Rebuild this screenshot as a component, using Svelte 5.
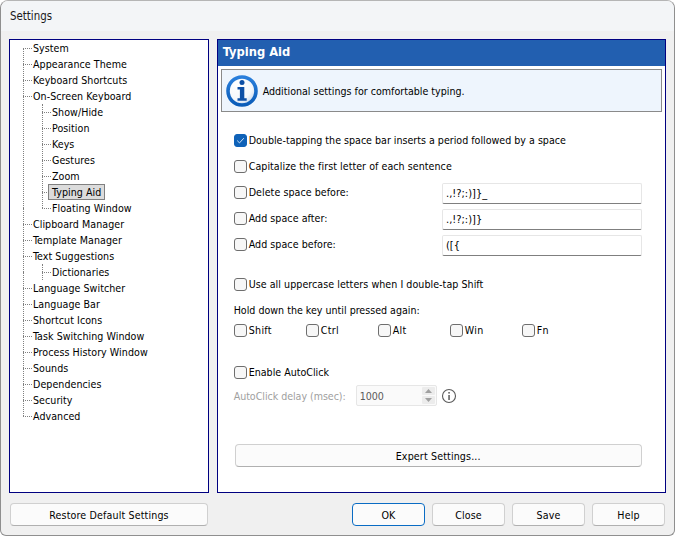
<script>
  const tree = [
    { t: 'System' },
    { t: 'Appearance Theme' },
    { t: 'Keyboard Shortcuts' },
    { t: 'On-Screen Keyboard', kids: ['Show/Hide', 'Position', 'Keys', 'Gestures', 'Zoom', 'Typing Aid', 'Floating Window'] },
    { t: 'Clipboard Manager' },
    { t: 'Template Manager' },
    { t: 'Text Suggestions', kids: ['Dictionaries'] },
    { t: 'Language Switcher' },
    { t: 'Language Bar' },
    { t: 'Shortcut Icons' },
    { t: 'Task Switching Window' },
    { t: 'Process History Window' },
    { t: 'Sounds' },
    { t: 'Dependencies' },
    { t: 'Security' },
    { t: 'Advanced' }
  ];
  const fields = [
    { label: 'Delete space before:', value: '.,!?;:)]}_' },
    { label: 'Add space after:', value: '.,!?;:)]}' },
    { label: 'Add space before:', value: '([{' }
  ];
  const keys = ['Shift', 'Ctrl', 'Alt', 'Win', 'Fn'];
</script>

<div class="window">
  <div class="titlebar">Settings</div>
  <div class="body">
    <div class="panes">
      <div class="tree">
        <ul class="level top">
          {#each tree as item}
            <li class="node">
              <span class="label">{item.t}</span>
              {#if item.kids}
                <ul class="level sub">
                  {#each item.kids as kid}
                    <li class="node"><span class="label" class:selected={kid === 'Typing Aid'}>{kid}</span></li>
                  {/each}
                </ul>
              {/if}
            </li>
          {/each}
        </ul>
      </div>
      <div class="page">
        <div class="header">Typing Aid</div>
        <div class="info">
          <svg class="info-icon" viewBox="0 0 32 32" width="32" height="32" aria-hidden="true">
            <defs>
              <radialGradient id="face" cx="0.35" cy="0.3" r="0.85">
                <stop offset="0" stop-color="#ffffff" />
                <stop offset="0.6" stop-color="#f4f7fb" />
                <stop offset="1" stop-color="#b4cbe6" />
              </radialGradient>
              <linearGradient id="ring" x1="0" y1="0" x2="0" y2="1">
                <stop offset="0" stop-color="#2a7fdc" />
                <stop offset="1" stop-color="#0b5cb8" />
              </linearGradient>
            </defs>
            <circle cx="16" cy="16" r="14" fill="url(#face)" stroke="url(#ring)" stroke-width="3.6" />
            <circle cx="16" cy="7.6" r="2.5" fill="#0c4fa6" />
            <path d="M11.5 12h6.8v11.2h2.4v2.6h-9.2v-2.6h2.4v-8.6h-2.4z" fill="#0c4fa6" />
          </svg>
          <span>Additional settings for comfortable typing.</span>
        </div>
        <div class="form">
          <label class="check first"><span class="box on"><svg viewBox="0 0 13 13" width="13" height="13"><path d="M3.2 6.6 5.5 8.9 9.8 4.2" fill="none" stroke="#cfe3f7" stroke-width="1" /></svg></span>Double-tapping the space bar inserts a period followed by a space</label>
          <label class="check r-next"><span class="box"></span>Capitalize the first letter of each sentence</label>
          <div class="fields">
            {#each fields as f}
              <div class="field">
                <label class="check"><span class="box"></span>{f.label}</label>
                <div class="text-input">{f.value}</div>
              </div>
            {/each}
          </div>
          <label class="check r-upper"><span class="box"></span>Use all uppercase letters when I double-tap Shift</label>
          <div class="hold">Hold down the key until pressed again:</div>
          <div class="keys">
            {#each keys as k}
              <label class="check key"><span class="box"></span>{k}</label>
            {/each}
          </div>
          <label class="check r-auto"><span class="box"></span>Enable AutoClick</label>
          <div class="delay">
            <span class="delay-label">AutoClick delay (msec):</span>
            <div class="spin">
              <span class="spin-value">1000</span>
              <span class="arrows">
                <span class="arrow"><svg viewBox="0 0 7 4" width="7" height="4"><path d="M0 4 3.5 0 7 4z" fill="#a0a0a0" /></svg></span>
                <span class="arrow"><svg viewBox="0 0 7 4" width="7" height="4"><path d="M0 0 3.5 4 7 0z" fill="#a0a0a0" /></svg></span>
              </span>
            </div>
            <svg class="hint" viewBox="0 0 16 16" width="16" height="16" aria-hidden="true">
              <circle cx="8" cy="8" r="6.5" fill="none" stroke="#5a5a5a" stroke-width="1.1" />
              <rect x="7.3" y="7" width="1.5" height="5" fill="#5a5a5a" />
              <rect x="7.3" y="4" width="1.5" height="1.6" fill="#5a5a5a" />
            </svg>
          </div>
          <button class="btn expert">Expert Settings...</button>
        </div>
      </div>
    </div>
    <div class="footer">
      <button class="btn restore">Restore Default Settings</button>
      <div class="actions">
        <button class="btn act primary">OK</button>
        <button class="btn act">Close</button>
        <button class="btn act">Save</button>
        <button class="btn act">Help</button>
      </div>
    </div>
  </div>
</div>

<style>
  :global(body) {
    margin: 0;
    background: #fff;
  }
  .window {
    box-sizing: border-box;
    width: 675px;
    height: 536px;
    display: flex;
    flex-direction: column;
    background: #f0f0f0;
    border: 1px solid #8f8f8f;
    border-top-color: #b5b5b5;
    border-radius: 8px 8px 6px 6px;
    overflow: hidden;
    font-family: "DejaVu Sans Condensed", "DejaVu Sans", sans-serif;
    font-size: 10.6px;
    letter-spacing: 0.05px;
    color: #000;
    white-space: nowrap;
  }
  .titlebar {
    height: 30px;
    flex: none;
    padding-left: 9px;
    line-height: 30px;
    font-size: 11.4px;
    letter-spacing: 0;
    background: #f3f5f7;
    color: #1a1a1a;
  }
  .body {
    flex: 1;
    display: flex;
    flex-direction: column;
    padding: 8px 8px 8px 8px;
    min-height: 0;
  }
  .panes {
    display: flex;
    gap: 8px;
    height: 454px;
  }
  .tree {
    box-sizing: border-box;
    width: 200px;
    height: 100%;
    background: #fff;
    border: 1px solid #000080;
    padding-top: 0;
  }
  .level {
    list-style: none;
    margin: 0;
    padding: 0;
  }
  .top {
    margin-left: 13px;
    position: relative;
  }
  .sub {
    margin-left: 9px;
    position: relative;
  }
  .node {
    position: relative;
    padding-left: 10px;
  }
  .node::before {
    content: "";
    position: absolute;
    left: 0;
    top: 8px;
    width: 9px;
    border-top: 1px dotted #808080;
  }
  .node::after {
    content: "";
    position: absolute;
    left: 0;
    top: -8px;
    bottom: -8px;
    border-left: 1px dotted #808080;
  }
  .node:last-child::after {
    bottom: auto;
    height: 16px;
  }
  .node:first-child::after {
    top: 8px;
  }
  .sub .node:first-child::after {
    top: 0;
  }
  .label {
    display: block;
    width: max-content;
    height: 16px;
    line-height: 16px;
    position: relative;
    z-index: 1;
  }
  .selected {
    box-sizing: border-box;
    background: #dcdcdc;
    border: 1px solid #808080;
    line-height: 14px;
    padding: 0 3px;
    margin-left: -4px;
  }
  .page {
    box-sizing: border-box;
    width: 450px;
    height: 100%;
    background: #fff;
    border: 1px solid #000080;
    display: flex;
    flex-direction: column;
  }
  .header {
    height: 26px;
    flex: none;
    line-height: 23px;
    padding-left: 5px;
    background: #225fb0;
    color: #fff;
    font-weight: 700;
    font-size: 12.8px;
    letter-spacing: 0;
  }
  .info {
    box-sizing: border-box;
    flex: none;
    height: 43px;
    margin: 3px 3px 0 3px;
    display: flex;
    align-items: center;
    gap: 5px;
    padding-left: 4px;
    letter-spacing: 0;
    background: #eef5fd;
    border: 1px solid #8a8a8a;
  }
  .form {
    padding: 20px 23px 0 16px;
    display: flex;
    flex-direction: column;
    flex: 1;
  }
  .check {
    display: flex;
    align-items: center;
    gap: 2px;
    height: 16px;
    line-height: 16px;
  }
  .first {
    letter-spacing: 0;
  }
  .box {
    box-sizing: border-box;
    width: 13px;
    height: 13px;
    flex: none;
    background: #f7f7f7;
    border: 1px solid #6e6e6e;
    border-radius: 3px;
    display: block;
  }
  .box svg {
    display: block;
    margin: -1px;
  }
  .box.on {
    background: #0f62b8;
    border-color: #0f62b8;
  }
  .r-next {
    margin-top: 10px;
  }
  .fields {
    margin-top: 9px;
    display: flex;
    flex-direction: column;
    gap: 5px;
  }
  .field {
    display: flex;
    align-items: center;
    justify-content: space-between;
  }
  .field .check {
    margin-bottom: 3px;
  }
  .text-input {
    box-sizing: border-box;
    width: 200px;
    height: 21px;
    line-height: 19px;
    padding-left: 3px;
    font-size: 11px;
    letter-spacing: 0;
    background: #fff;
    border: 1px solid #e6e6e6;
    border-bottom: 1px solid #7f7f7f;
    border-radius: 2px;
  }
  .r-upper {
    margin-top: 20px;
  }
  .hold {
    height: 16px;
    line-height: 16px;
    margin-top: 10px;
    letter-spacing: 0;
  }
  .keys {
    display: flex;
    margin-top: 4px;
  }
  .key {
    width: 72px;
    letter-spacing: 0.3px;
  }
  .r-auto {
    margin-top: 26px;
    letter-spacing: 0;
  }
  .delay {
    display: flex;
    align-items: center;
    height: 21px;
    margin-top: 5px;
    color: #a0a0a0;
    letter-spacing: -0.04px;
  }
  .delay-label {
    width: 122px;
    flex: none;
  }
  .spin {
    box-sizing: border-box;
    width: 81px;
    height: 21px;
    display: flex;
    align-items: center;
    justify-content: space-between;
    padding-left: 3px;
    background: #fafafa;
    border: 1px solid #e6e6e6;
    border-radius: 2px;
    color: #5a5a5a;
  }
  .arrows {
    display: flex;
    flex-direction: column;
    gap: 1px;
    margin-right: 1px;
  }
  .arrow {
    width: 13px;
    height: 8px;
    display: flex;
    align-items: center;
    justify-content: center;
    background: #ececec;
    border-radius: 1px;
  }
  .hint {
    margin-left: 4px;
  }
  .btn {
    box-sizing: border-box;
    height: 23px;
    padding: 0;
    background: #fbfbfb;
    border: 1px solid #d0d0d0;
    border-bottom-color: #b0b0b0;
    border-radius: 4px;
    font: inherit;
    letter-spacing: 0.14px;
    color: #000;
  }
  .expert {
    width: 407px;
    margin-top: 38px;
    margin-left: 1px;
  }
  .footer {
    display: flex;
    justify-content: space-between;
    margin-top: 10px;
    padding: 0 1px;
  }
  .restore {
    width: 198px;
  }
  .actions {
    display: flex;
    gap: 7px;
  }
  .act {
    width: 73px;
  }
  .primary {
    border: 1px solid #0a6cc4;
  }
</style>
